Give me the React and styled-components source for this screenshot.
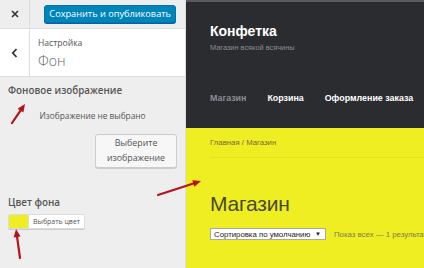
import styled, { createGlobalStyle } from "styled-components";

const Global = createGlobalStyle`
	html, body {
		margin: 0;
		padding: 0;
		width: 424px;
		height: 268px;
		overflow: hidden;
		background: #eee;
	}
	* { box-sizing: border-box; }
`;

const Page = styled.div`
	position: relative;
	display: flex;
	width: 424px;
	height: 268px;
	overflow: hidden;
`;

const Sidebar = styled.aside`
	width: 186px;
	flex-shrink: 0;
	background: #eee;
	border-right: 1px solid #ddd;
	font-family: "Open Sans", "Noto Sans", sans-serif;
	color: #555;
`;

const TopBar = styled.div`
	display: flex;
	align-items: center;
	height: 29px;
	border-bottom: 1px solid #ddd;
`;

const IconCell = styled.div`
	width: 30px;
	height: 100%;
	display: flex;
	align-items: center;
	justify-content: center;
	border-right: 1px solid #ddd;
	color: #333;
`;

const SaveButton = styled.button`
	margin-left: auto;
	margin-right: 9px;
	height: 18px;
	padding: 0 4px;
	border: 1px solid #0073aa;
	border-radius: 3px;
	background: #0085ba;
	color: #fff;
	font-family: "Open Sans", sans-serif;
	font-size: 9.2px;
	line-height: 16px;
	box-shadow: 0 1px 0 #006799;
`;

const SectionHead = styled.div`
	display: flex;
	height: 48px;
	background: #fff;
	border-bottom: 1px solid #ddd;
`;

const Titles = styled.div`
	padding: 8px 0 0 8px;
	display: flex;
	flex-direction: column;
`;

const Crumb = styled.span`
	font-size: 8.6px;
	line-height: 13px;
	color: #555;
`;

const SectionName = styled.span`
	font-size: 14px;
	line-height: 22px;
	color: #666;
	font-weight: 300;
`;

const Content = styled.div`
	padding: 7px 8px 0;
	display: flex;
	flex-direction: column;
`;

const Label = styled.div`
	font-size: 9.8px;
	line-height: 14px;
	font-weight: 600;
	color: #555;
	margin-top: ${props => props.gap || 0}px;
`;

const Placeholder = styled.div`
	margin-top: 12px;
	text-align: center;
	font-size: 8.3px;
	line-height: 12px;
	color: #555;
`;

const PickImage = styled.button`
	align-self: flex-end;
	margin-top: 12px;
	width: 82px;
	height: 34px;
	border: 1px solid #ccc;
	border-radius: 3px;
	background: #f7f7f7;
	box-shadow: 0 1px 0 #ccc;
	font-family: "Open Sans", sans-serif;
	font-size: 8.8px;
	line-height: 15px;
	color: #555;
	padding: 0;
`;

const ColorPicker = styled.div`
	display: flex;
	align-self: flex-start;
	margin-top: 4px;
	height: 15px;
	border: 1px solid #ddd;
	border-radius: 2px;
	box-shadow: 0 1px 0 #ccc;
	overflow: hidden;
`;

const Swatch = styled.span`
	width: 19px;
	background: ${props => props.color};
`;

const SwatchText = styled.span`
	background: #fff;
	font-size: 7px;
	line-height: 13px;
	padding: 0 4px 0 4px;
	white-space: nowrap;
	color: #555;
	border-left: 1px solid #ddd;
`;

const Preview = styled.main`
	flex: 1;
	display: flex;
	flex-direction: column;
	min-width: 0;
	font-family: "Liberation Sans", Arial, sans-serif;
`;

const Header = styled.header`
	height: 128px;
	background: #2b2c30;
	border-top: 2px solid #5a5b5f;
	padding: 20px 0 0 24px;
`;

const SiteTitle = styled.div`
	font-size: 14px;
	line-height: 18px;
	font-weight: bold;
	color: #fff;
`;

const Tagline = styled.div`
	margin-top: 3px;
	font-size: 7.4px;
	line-height: 10px;
	color: #8b8c90;
`;

const Nav = styled.nav`
	display: flex;
	gap: 21px;
	margin-top: 39px;
	white-space: nowrap;
`;

const NavItem = styled.span`
	font-size: 8.9px;
	line-height: 12px;
	font-weight: bold;
	color: ${props => props.active ? "#8b8c90" : "#fff"};
`;

const Body = styled.div`
	flex: 1;
	background: #eeee22;
	padding: 0 0 0 24px;
	overflow: hidden;
`;

const Breadcrumbs = styled.div`
	height: 30px;
	padding-top: 10px;
	font-size: 7.8px;
	line-height: 10px;
	color: #7b6a33;
	border-bottom: 1px solid #e3e31c;
`;

const PageTitle = styled.h1`
	margin: 33px 0 0;
	font-size: 21px;
	line-height: 26px;
	font-weight: normal;
	color: #4a4a2a;
	letter-spacing: -0.2px;
`;

const Toolbar = styled.div`
	display: flex;
	align-items: center;
	gap: 8px;
	margin-top: 11px;
	white-space: nowrap;
`;

const Select = styled.div`
	width: 116px;
	flex-shrink: 0;
	height: 12px;
	background: #fff;
	border: 1px solid #aaa;
	display: flex;
	align-items: center;
	justify-content: space-between;
	padding: 0 4px 0 3px;
	font-size: 7.8px;
	color: #222;
`;

const Count = styled.span`
	font-size: 7.8px;
	color: #7d7c4a;
`;

const Arrow = styled.svg`
	position: absolute;
	left: 0;
	top: 0;
	pointer-events: none;
`;

const RedArrow = ({ x1, y1, x2, y2 }) => {
	const a = Math.atan2(y2 - y1, x2 - x1);
	const l = 8, w = 3.5;
	const bx = x2 - l * Math.cos(a), by = y2 - l * Math.sin(a);
	const p1 = `${bx + w * Math.sin(a)},${by - w * Math.cos(a)}`;
	const p2 = `${bx - w * Math.sin(a)},${by + w * Math.cos(a)}`;
	return (
		<g>
			<line x1={x1} y1={y1} x2={bx} y2={by} stroke="#b5121b" strokeWidth="2.2" strokeLinecap="round" />
			<polygon points={`${x2},${y2} ${p1} ${p2}`} fill="#b5121b" />
		</g>
	);
};

const App = () => {
	return (
		<Page>
			<Global />
			<Sidebar>
				<TopBar>
					<IconCell>
						<svg width="8" height="8" viewBox="0 0 8 8">
							<path d="M1 1L7 7M7 1L1 7" stroke="#333" strokeWidth="1.6" />
						</svg>
					</IconCell>
					<SaveButton>Сохранить и опубликовать</SaveButton>
				</TopBar>
				<SectionHead>
					<IconCell>
						<svg width="7" height="10" viewBox="0 0 7 10">
							<path d="M5.5 1L1.8 5L5.5 9" stroke="#333" strokeWidth="1.8" fill="none" />
						</svg>
					</IconCell>
					<Titles>
						<Crumb>Настройка</Crumb>
						<SectionName>Фон</SectionName>
					</Titles>
				</SectionHead>
				<Content>
					<Label>Фоновое изображение</Label>
					<Placeholder>Изображение не выбрано</Placeholder>
					<PickImage>Выберите<br />изображение</PickImage>
					<Label gap={28}>Цвет фона</Label>
					<ColorPicker>
						<Swatch color="#eeee22" />
						<SwatchText>Выбрать цвет</SwatchText>
					</ColorPicker>
				</Content>
			</Sidebar>
			<Preview>
				<Header>
					<SiteTitle>Конфетка</SiteTitle>
					<Tagline>Магазин всякой всячины</Tagline>
					<Nav>
						<NavItem active>Магазин</NavItem>
						<NavItem>Корзина</NavItem>
						<NavItem>Оформление заказа</NavItem>
					</Nav>
				</Header>
				<Body>
					<Breadcrumbs>Главная / Магазин</Breadcrumbs>
					<PageTitle>Магазин</PageTitle>
					<Toolbar>
						<Select>
							<span>Сортировка по умолчанию</span>
							<span style={{ fontSize: "6px" }}>▼</span>
						</Select>
						<Count>Показ всех — 1 результат</Count>
					</Toolbar>
				</Body>
			</Preview>
			<Arrow width="424" height="268" viewBox="0 0 424 268">
				<RedArrow x1={12} y1={123} x2={25} y2={104} />
				<RedArrow x1={158} y1={195} x2={201} y2={181} />
				<RedArrow x1={20} y1={258} x2={16} y2={229} />
			</Arrow>
		</Page>
	);
};

export default App;
